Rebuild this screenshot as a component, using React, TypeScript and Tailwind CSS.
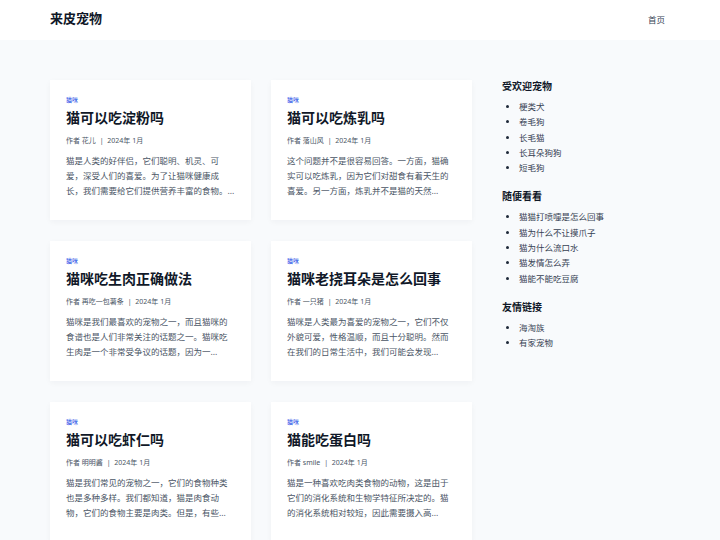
import React from 'react';

interface Post {
  title: string;
  author: string;
  excerpt: string;
}

const posts: Post[] = [
  {
    title: '猫可以吃淀粉吗',
    author: '花儿',
    excerpt: '猫是人类的好伴侣，它们聪明、机灵、可爱，深受人们的喜爱。为了让猫咪健康成长，我们需要给它们提供营养丰富的食物。...',
  },
  {
    title: '猫可以吃炼乳吗',
    author: '落山风',
    excerpt: '这个问题并不是很容易回答。一方面，猫确实可以吃炼乳，因为它们对甜食有着天生的喜爱。另一方面，炼乳并不是猫的天然...',
  },
  {
    title: '猫咪吃生肉正确做法',
    author: '再吃一包薯条',
    excerpt: '猫咪是我们最喜欢的宠物之一，而且猫咪的食谱也是人们非常关注的话题之一。猫咪吃生肉是一个非常受争议的话题，因为一...',
  },
  {
    title: '猫咪老挠耳朵是怎么回事',
    author: '一只猪',
    excerpt: '猫咪是人类最为喜爱的宠物之一，它们不仅外貌可爱，性格温顺，而且十分聪明。然而在我们的日常生活中，我们可能会发现...',
  },
  {
    title: '猫可以吃虾仁吗',
    author: '明明酱',
    excerpt: '猫是我们常见的宠物之一，它们的食物种类也是多种多样。我们都知道，猫是肉食动物，它们的食物主要是肉类。但是，有些...',
  },
  {
    title: '猫能吃蛋白吗',
    author: 'smile',
    excerpt: '猫是一种喜欢吃肉类食物的动物，这是由于它们的消化系统和生物学特征所决定的。猫的消化系统相对较短，因此需要摄入高...',
  },
];

const sidebar = [
  { title: '受欢迎宠物', items: ['梗类犬', '卷毛狗', '长毛猫', '长耳朵狗狗', '短毛狗'] },
  { title: '随便看看', items: ['猫猫打喷嚏是怎么回事', '猫为什么不让摸爪子', '猫为什么流口水', '猫发情怎么弄', '猫能不能吃豆腐'] },
  { title: '友情链接', items: ['海淘族', '有家宠物'] },
];

const PostCard: React.FC<{ post: Post }> = ({ post }) => (
  <div className="h-[140px] bg-white px-4 pt-4 shadow-[0_2px_6px_rgba(15,23,42,0.04)]">
    <div className="text-[6px] leading-[8px] text-blue-700">猫咪</div>
    <h2 className="mt-[3px] text-[14px] leading-[22px] font-bold text-gray-900">{post.title}</h2>
    <div className="mt-[6px] text-[7px] leading-[12px] text-gray-600">
      作者 {post.author} <span className="mx-[2px]">|</span> 2024年 1月
    </div>
    <p className="mt-[6px] text-[8.5px] leading-[15px] text-gray-600">{post.excerpt}</p>
  </div>
);

export default function App() {
  return (
    <div
      className="min-h-screen bg-[#f8fafc]"
      style={{ fontFamily: '"Noto Sans", "Noto Sans CJK SC", sans-serif' }}
    >
      <header className="bg-white">
        <div className="mx-[50px] flex h-10 items-center justify-between">
          <div className="text-[13px] font-bold text-gray-900 pb-[3px]">来皮宠物</div>
          <nav className="pr-[5px] text-[8.5px] text-gray-700">首页</nav>
        </div>
      </header>

      <main className="mx-[50px] flex pt-10">
        <div className="grid grid-cols-[201px_201px] gap-x-5 gap-y-[21px]">
          {posts.map((p) => (
            <PostCard key={p.title} post={p} />
          ))}
        </div>

        <aside className="ml-[30px] w-[168px]">
          {sidebar.map((s, i) => (
            <div key={s.title} className={i > 0 ? 'mt-[15px]' : ''}>
              <h3 className="text-[10px] leading-[14px] font-bold text-gray-900 -mt-[1px]">{s.title}</h3>
              <ul className="mt-[6px] list-disc pl-[17px] text-[8.5px] leading-[15.3px] text-gray-700 marker:text-gray-800">
                {s.items.map((it) => (
                  <li key={it}>{it}</li>
                ))}
              </ul>
            </div>
          ))}
        </aside>
      </main>
    </div>
  );
}
